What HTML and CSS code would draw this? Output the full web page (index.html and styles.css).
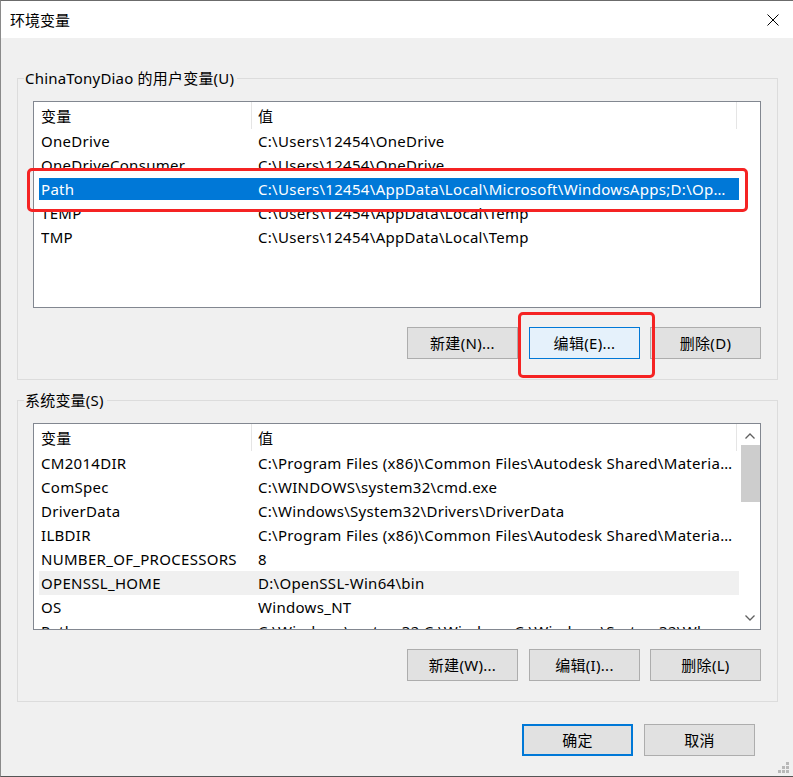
FILE: index.html
```html
<!DOCTYPE html>
<html lang="zh-CN">
<head>
<meta charset="utf-8">
<title>环境变量</title>
<link rel="stylesheet" href="styles.css">
</head>
<body>
<div class="window">
  <div class="titlebar">
    <span class="title">环境变量</span>
    <svg class="close" width="12" height="12" viewBox="0 0 12 12"><path d="M0.5 0.5 L11.5 11.5 M11.5 0.5 L0.5 11.5" stroke="#000" stroke-width="1" fill="none"/></svg>
  </div>
  <div class="content">
    <fieldset class="group">
      <legend>ChinaTonyDiao 的用户变量(U)</legend>
      <div class="list">
        <div class="head"><span class="hc1">变量</span><span class="hc2">值</span></div>
        <div class="row"><span>OneDrive</span><span>C:\Users\12454\OneDrive</span></div>
        <div class="row"><span>OneDriveConsumer</span><span>C:\Users\12454\OneDrive</span></div>
        <div class="row selected"><span>Path</span><span>C:\Users\12454\AppData\Local\Microsoft\WindowsApps;D:\OpenSSL-Win64\bin</span></div>
        <div class="row"><span>TEMP</span><span>C:\Users\12454\AppData\Local\Temp</span></div>
        <div class="row"><span>TMP</span><span>C:\Users\12454\AppData\Local\Temp</span></div>
      </div>
      <div class="buttons">
        <button class="btn">新建(N)...</button>
        <button class="btn focus-light">编辑(E)...</button>
        <button class="btn">删除(D)</button>
      </div>
    </fieldset>

    <fieldset class="group second">
      <legend>系统变量(S)</legend>
      <div class="list scroll">
        <div class="head"><span class="hc1">变量</span><span class="hc2">值</span></div>
        <div class="rows">
          <div class="row"><span>CM2014DIR</span><span>C:\Program Files (x86)\Common Files\Autodesk Shared\Materials\2014</span></div>
          <div class="row"><span>ComSpec</span><span>C:\WINDOWS\system32\cmd.exe</span></div>
          <div class="row"><span>DriverData</span><span>C:\Windows\System32\Drivers\DriverData</span></div>
          <div class="row"><span>ILBDIR</span><span>C:\Program Files (x86)\Common Files\Autodesk Shared\Materials\2014</span></div>
          <div class="row"><span>NUMBER_OF_PROCESSORS</span><span>8</span></div>
          <div class="row hover"><span>OPENSSL_HOME</span><span>D:\OpenSSL-Win64\bin</span></div>
          <div class="row"><span>OS</span><span>Windows_NT</span></div>
          <div class="row"><span>Path</span><span>C:\Windows\system32;C:\Windows;C:\Windows\System32\Wbem</span></div>
        </div>
        <div class="scrollbar">
          <svg class="arrow" width="10" height="6" viewBox="0 0 10 6"><path d="M0.5 5.5 L5 1 L9.5 5.5" stroke="#606060" stroke-width="1.3" fill="none"/></svg>
          <div class="thumb"></div>
          <div class="track"></div>
          <svg class="arrow" width="10" height="6" viewBox="0 0 10 6"><path d="M0.5 0.5 L5 5 L9.5 0.5" stroke="#606060" stroke-width="1.3" fill="none"/></svg>
        </div>
      </div>
      <div class="buttons">
        <button class="btn">新建(W)...</button>
        <button class="btn">编辑(I)...</button>
        <button class="btn">删除(L)</button>
      </div>
    </fieldset>

    <div class="footer">
      <button class="btn default">确定</button>
      <button class="btn">取消</button>
    </div>
    <div class="grip">
      <i></i><i></i><i></i><i></i><i></i><i></i>
    </div>
  </div>
  <div class="mark mark-path"></div>
  <div class="mark mark-edit"></div>
</div>
</body>
</html>
```

FILE: styles.css
```css
* { box-sizing: border-box; }
html, body { margin: 0; padding: 0; }
body {
  font-family: "Noto Sans", "Noto Sans CJK SC", sans-serif;
  font-size: 15px;
  letter-spacing: 0.3px;
  color: #000;
  background: #f0f0f0;
}
.window {
  position: relative;
  width: 793px;
  height: 777px;
  border-top: 1px solid #6b6b6b;
  border-left: 1px solid #8a8a8a;
  border-bottom: 1px solid #555;
  background: #f0f0f0;
  overflow: hidden;
}
.titlebar {
  height: 37px;
  background: #fff;
  display: flex;
  align-items: center;
  justify-content: space-between;
  padding: 0 14px 0 9px;
}
.title { font-family: "Noto Sans CJK SC", sans-serif; font-size: 15px; letter-spacing: 0; }
.content {
  padding: 30px 15px 0 16px;
  position: relative;
  height: 738px;
}
.group {
  margin: 0;
  padding: 13px 16px 20px 15px;
  border: 1px solid #dcdcdc;
  width: 761px;
  min-width: 0;
}
.group legend {
  margin-left: -9px;
  padding: 0 3px 0 1px;
  line-height: 20px;
  height: 20px;
  letter-spacing: 0.2px;
}
.group.second { margin-top: 10px; }
.list {
  width: 728px;
  height: 207px;
  border: 1px solid #828790;
  background: #fff;
  overflow: hidden;
  position: relative;
}
.head {
  height: 27px;
  display: grid;
  grid-template-columns: 217px 487px;
  padding-left: 6px;
  align-items: center;
}
.head span { height: 27px; line-height: 28px; padding-left: 1px; }
.hc1 { border-right: 1px solid #e5e5e5; margin-right: 6px; width: 212px; }
.hc2 { border-right: 1px solid #e5e5e5; width: 480px; }
.row {
  margin-left: 5px;
  width: 700px;
  height: 24px;
  line-height: 25px;
  display: grid;
  grid-template-columns: 217px 483px;
  padding-left: 2px;
}
.row span {
  white-space: nowrap;
  overflow: hidden;
  text-overflow: ellipsis;
  padding-right: 7px;
}
.row.selected {
  background: #0078d7;
  color: #fff;
  box-shadow: inset 0 1px 0 #fff, inset 0 -1px 0 #fff;
}
.row.hover { background: #f0f0f0; }
.scroll .rows { height: 179px; overflow: hidden; }
.scrollbar {
  position: absolute;
  top: 0;
  right: 0;
  width: 21px;
  height: 100%;
  background: #fff;
  display: flex;
  flex-direction: column;
  align-items: center;
  padding: 9px 0 8px 2px;
}
.arrow { flex: none; margin-left: -1px; }
.thumb {
  width: 19px;
  height: 57px;
  background: #cdcdcd;
  margin-top: 6px;
  margin-left: -1px;
}
.track { flex: 1; }
.buttons {
  display: flex;
  justify-content: flex-end;
  gap: 10px;
  margin-top: 19px;
  width: 728px;
}
.buttons .btn:first-child { margin-right: 1px; }
.btn {
  font-family: "Noto Sans", "Noto Sans CJK SC", sans-serif;
  font-size: 15px;
  letter-spacing: 0.3px;
  color: #000;
  width: 111px;
  height: 32px;
  background: #e1e1e1;
  border: 1px solid #adadad;
  padding: 0;
  line-height: 28px;
}
.btn.focus-light {
  background: #e5f1fb;
  border-color: #0078d7;
}
.btn.default {
  border: 2px solid #0078d7;
}
.footer {
  display: flex;
  justify-content: flex-end;
  gap: 11px;
  margin-top: 22px;
  padding-right: 23px;
}
.grip {
  position: absolute;
  right: 4px;
  bottom: 3px;
  width: 11px;
  height: 11px;
  display: grid;
  grid-template-columns: repeat(3, 3px);
  grid-template-rows: repeat(3, 3px);
  gap: 1px;
}
.grip i { background: #b8b8b8; display: block; }
.grip i:nth-child(1) { grid-column: 3; grid-row: 1; }
.grip i:nth-child(2) { grid-column: 2; grid-row: 2; }
.grip i:nth-child(3) { grid-column: 3; grid-row: 2; }
.grip i:nth-child(4) { grid-column: 1; grid-row: 3; }
.grip i:nth-child(5) { grid-column: 2; grid-row: 3; }
.grip i:nth-child(6) { grid-column: 3; grid-row: 3; }
.mark {
  position: absolute;
  border: 3px solid #f52323;
  border-radius: 5px;
}
.mark-path { left: 26px; top: 167px; width: 721px; height: 44px; }
.mark-edit { left: 517px; top: 311px; width: 137px; height: 66px; }
```
